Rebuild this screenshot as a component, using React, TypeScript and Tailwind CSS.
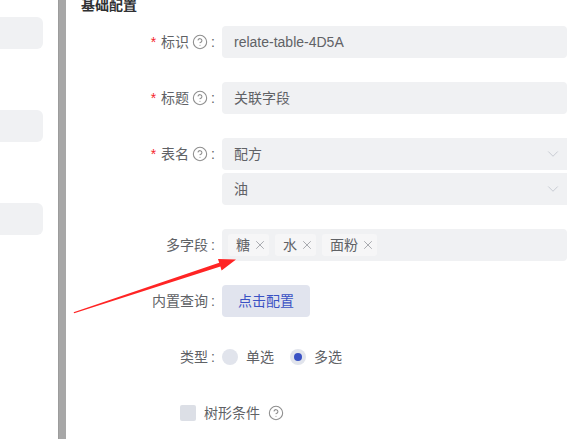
import { ChevronDown, CircleHelp, X } from 'lucide-react'

const FONT = { fontFamily: '"Liberation Sans", "Noto Sans CJK SC", sans-serif' }

function Help({ className = '' }: { className?: string }) {
  return <CircleHelp size={16} strokeWidth={1.6} className={`text-[#8e8e8e] ${className}`} />
}

function Label({ text, required, help }: { text: string; required?: boolean; help?: boolean }) {
  return (
    <div className="w-[156px] h-8 flex items-center justify-end shrink-0 text-[14px] text-[#606266]">
      {required && <span className="text-[#f5222d] mr-[5px]">*</span>}
      <span>{text}</span>
      {help && <Help className="ml-[3px]" />}
      <span className="ml-[3px] mr-[7px]">:</span>
    </div>
  )
}

function Field({ value, select }: { value: string; select?: boolean }) {
  return (
    <div className="relative w-[360px] h-8 rounded-[4px] bg-[#f0f1f3] flex items-center pl-3 text-[14px] text-[#606266]">
      {value}
      {select && (
        <ChevronDown size={18} strokeWidth={1.1} className="absolute right-[20px] text-[#c0c4cc]" />
      )}
    </div>
  )
}

function Tag({ text }: { text: string }) {
  return (
    <span className="h-[22px] rounded-[3px] bg-[#f6f6f7] flex items-center pl-2 pr-[2px] gap-[3px] text-[14px] text-[#606266]">
      {text}
      <X size={14} strokeWidth={1.3} className="text-[#909399]" />
    </span>
  )
}

function Radio({ label, checked }: { label: string; checked?: boolean }) {
  return (
    <label className="flex items-center gap-2 text-[14px] text-[#606266]">
      <span className="w-4 h-4 rounded-full bg-[#e1e4ec] flex items-center justify-center">
        {checked && <span className="w-2 h-2 rounded-full bg-[#3a52c4]" />}
      </span>
      {label}
    </label>
  )
}

export default function App() {
  return (
    <div className="relative w-[567px] h-[439px] overflow-hidden bg-white flex" style={FONT}>
      <aside className="w-[58px] shrink-0 flex flex-col pt-[17px] gap-[61px]">
        <div className="-ml-5 w-[63px] h-8 rounded-md bg-[#f0f1f3]" />
        <div className="-ml-5 w-[63px] h-8 rounded-md bg-[#f0f1f3]" />
        <div className="-ml-5 w-[63px] h-8 rounded-md bg-[#f0f1f3]" />
      </aside>

      <div className="w-2 shrink-0 bg-[#a7a7a7] border-l border-[#9c9c9c]" />

      <main className="flex-1 min-w-0">
        <h3 className="-mt-[6px] pl-[15px] leading-[22px] text-[14px] font-bold text-[#303133]">基础配置</h3>

        <div className="mt-[10px] flex flex-col gap-6">
          <div className="flex">
            <Label text="标识" required help />
            <Field value="relate-table-4D5A" />
          </div>

          <div className="flex">
            <Label text="标题" required help />
            <Field value="关联字段" />
          </div>

          <div className="flex">
            <Label text="表名" required help />
            <div className="flex flex-col gap-[3px]">
              <Field value="配方" select />
              <Field value="油" select />
            </div>
          </div>

          <div className="flex">
            <Label text="多字段" />
            <div className="w-[360px] h-8 rounded-[4px] bg-[#f0f1f3] flex items-center pl-[6px] gap-[6px]">
              <Tag text="糖" />
              <Tag text="水" />
              <Tag text="面粉" />
            </div>
          </div>

          <div className="flex">
            <Label text="内置查询" />
            <button className="h-8 px-4 rounded-[4px] bg-[#e1e4ee] text-[14px] text-[#3a52c4]">点击配置</button>
          </div>

          <div className="flex">
            <Label text="类型" />
            <div className="flex items-center gap-4">
              <Radio label="单选" />
              <Radio label="多选" checked />
            </div>
          </div>

          <div className="flex h-8 items-center pl-[114px] gap-2 text-[14px] text-[#606266]">
            <span className="w-4 h-4 rounded-[2px] bg-[#dcdfe6]" />
            <span>树形条件</span>
            <Help />
          </div>
        </div>
      </main>

      <svg className="absolute inset-0 pointer-events-none" width="567" height="439">
        <polygon
          points="73.6,312.3 219.2,262.8 218,259 236,259.5 221.6,270.4 220.4,266.6 74.2,313.2"
          fill="#ff2424"
        />
      </svg>
    </div>
  )
}
